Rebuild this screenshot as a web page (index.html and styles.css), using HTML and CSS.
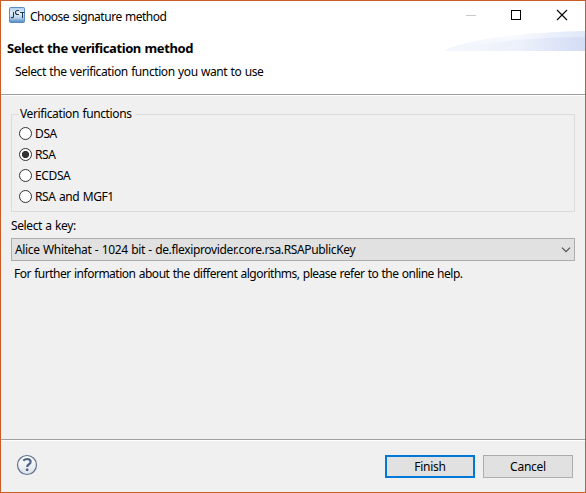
FILE: index.html
```html
<!DOCTYPE html>
<html lang="en">
<head>
<meta charset="utf-8">
<title>Choose signature method</title>
<link rel="stylesheet" href="styles.css">
</head>
<body>
<main class="window">
  <div class="titlebar">
    <svg class="app-icon" width="16" height="16" viewBox="0 0 16 16">
      <defs><linearGradient id="app" x1="0" y1="0" x2="0" y2="1"><stop offset="0" stop-color="#a9cdec"/><stop offset=".4" stop-color="#e9f3fb"/><stop offset=".68" stop-color="#b9d4ed"/><stop offset="1" stop-color="#4a84c0"/></linearGradient></defs>
      <rect x=".5" y=".5" width="15" height="15" rx="1" fill="url(#app)" stroke="#5a8dc0"/>
      <path d="M4.500 5v4.500q0 1.500-2.500 1M10 3.500H8.500q-2 0-2 2t2 2H10M11 5.500h4.500M13.500 5.500V11" fill="none" stroke="#26384c" stroke-width="1.100"/>
    </svg>
    <span class="title">Choose signature method</span>
    <svg class="controls" width="104" height="12" viewBox="0 0 104 12">
      <path d="M1 6.500h10" stroke="#c9c9c9"/>
      <rect x="46.500" y="1.500" width="9" height="9" fill="none" stroke="#000"/>
      <path d="M92 1l10 10M102 1L92 11" stroke="#000" stroke-width="1.100"/>
    </svg>
  </div>
  <header class="header">
    <svg class="swoosh" width="141" height="20" viewBox="0 0 141 20">
      <defs>
        <linearGradient id="back"><stop offset="0" stop-color="#f0f6fc"/><stop offset=".5" stop-color="#f7f9fe"/><stop offset="1" stop-color="#dfe8f8"/></linearGradient>
        <linearGradient id="front"><stop offset="0" stop-color="#f5f9fd"/><stop offset=".55" stop-color="#ebf0fa"/><stop offset="1" stop-color="#d3dcf5"/></linearGradient>
      </defs>
      <path d="M0 20C16 10 75 1 141 0v20z" fill="url(#back)"/>
      <path d="M0 20C30 12 90 6 141 6v14z" fill="url(#front)"/>
    </svg>
    <h1 class="heading">Select the verification method</h1>
    <p class="subtitle">Select the verification function you want to use</p>
  </header>
  <section class="body">
    <fieldset class="group">
      <legend><span>Verification functions</span></legend>
      <div class="option"><span class="radio"></span><span>DSA</span></div>
      <div class="option"><span class="radio checked"></span><span>RSA</span></div>
      <div class="option"><span class="radio"></span><span>ECDSA</span></div>
      <div class="option"><span class="radio"></span><span>RSA and MGF1</span></div>
    </fieldset>
    <div class="key-label"><span>Select a key:</span></div>
    <div class="combo">
      <span class="combo-text">Alice Whitehat - 1024 bit - de.flexiprovider.core.rsa.RSAPublicKey</span>
      <svg width="10" height="6" viewBox="0 0 10 6"><path d="M1 .7l4 4 4-4" fill="none" stroke="#505050" stroke-width="1.200"/></svg>
    </div>
    <p class="hint">For further information about the different algorithms, please refer to the online help.</p>
  </section>
  <footer class="footer">
    <svg class="help" width="22" height="22" viewBox="0 0 22 22">
      <defs><linearGradient id="help" x1="0" y1="0" x2="0" y2="1"><stop offset="0" stop-color="#fff"/><stop offset="1" stop-color="#dde2e9"/></linearGradient></defs>
      <circle cx="11" cy="11" r="9.500" fill="url(#help)" stroke="#60718c" stroke-width="1.200"/>
      <path d="M7.300 6.600Q9 5 11.200 5q3.400.1 3.400 2.800 0 1.500-1.900 2.700-1.500 1-1.500 2.500" fill="none" stroke="#4f6585" stroke-width="2.200"/>
      <rect x="9.900" y="14.600" width="2.500" height="2.300" rx=".6" fill="#4f6585"/>
    </svg>
    <button class="btn primary"><span>Finish</span></button>
    <button class="btn"><span>Cancel</span></button>
  </footer>
</main>
</body>
</html>
```
FILE: styles.css
```css
* { box-sizing: border-box; }
body { margin: 0; font: 12px/16px "Noto Sans", "Open Sans", sans-serif; color: #000; letter-spacing: -0.38px; word-spacing: 0.6px; }
h1, p { margin: 0; font-size: 12px; }
span, h1, p { white-space: nowrap; }
.window { width: 586px; height: 493px; border: 1px solid #ca5d26; background: #f0f0f0; display: flex; flex-direction: column; }
.titlebar { height: 30px; background: #fff; display: flex; align-items: center; padding: 0 16px 2px 8px; }
.title { margin: 3px 0 0 5px; letter-spacing: -0.48px; }
.controls { margin-left: auto; }
.header { height: 65px; background: #fff; border-bottom: 1px solid #fff; box-shadow: inset 0 -1px #a0a0a0; position: relative; padding: 9px 0 0 6px; }
.swoosh { position: absolute; right: 0; top: 0; }
.heading { position: relative; font-size: 13px; font-weight: 700; line-height: 16px; letter-spacing: -0.4px; }
.subtitle { position: relative; margin: 8px 0 0 8px; letter-spacing: -0.4px; }
.body { height: 343px; padding: 10px; }
.group { height: 106px; margin: 0; padding: 1px 0 0 7px; border: 1px solid #dcdcdc; min-width: 0; }
legend { height: 16px; padding: 0 1px; width: 116px; }
.option { height: 21px; display: flex; align-items: center; gap: 3px; }
.radio { width: 13px; height: 13px; border: 1px solid #333; border-radius: 50%; background: #fff; }
.checked { background: radial-gradient(circle, #333 3.2px, #fff 4px); }
.key-label { height: 16px; margin-top: 6px; }
.combo { height: 23px; margin-top: 4px; border: 1px solid #adadad; background: #e1e1e1; display: flex; align-items: center; justify-content: space-between; padding: 0 3px; }
.combo-text { letter-spacing: -0.35px; }
.hint { margin: 5px 0 0 3px; letter-spacing: -0.49px; }
.footer { flex: 1; border-top: 1px solid #a0a0a0; box-shadow: inset 0 1px #fff; display: flex; align-items: center; gap: 8px; padding: 0 12px 0 15px; }
.help { margin: 0 auto 2px 0; }
.btn { width: 90px; height: 23px; padding: 1px 0 0; border: 1px solid #adadad; background: #e1e1e1; font: inherit; letter-spacing: -0.25px; color: #000; }
.primary { border: 2px solid #0078d7; }
```
